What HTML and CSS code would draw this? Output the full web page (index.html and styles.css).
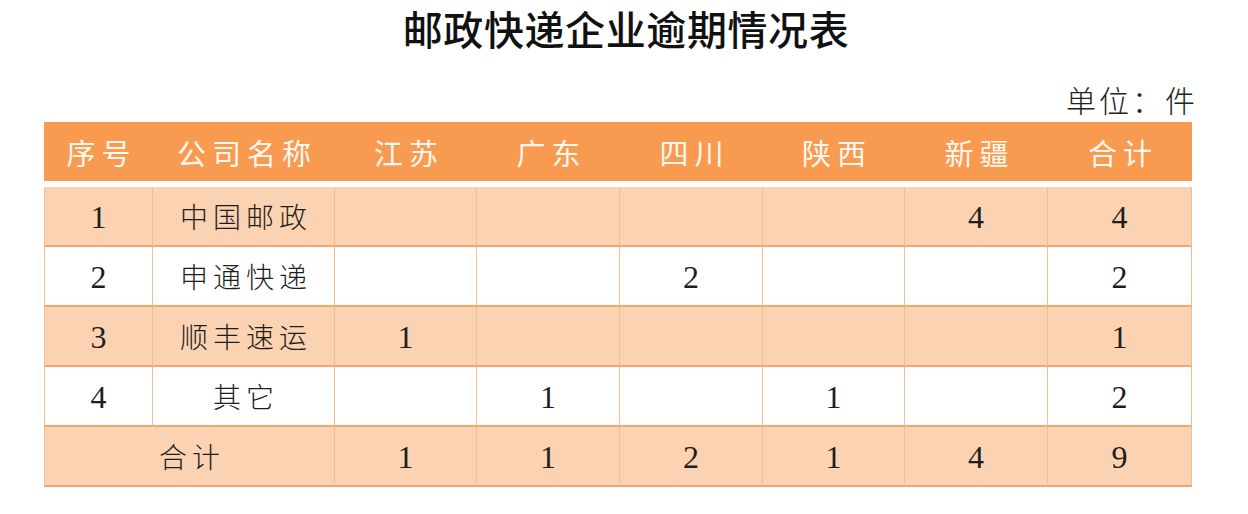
FILE: index.html
```html
<!DOCTYPE html>
<html lang="zh">
<head>
<meta charset="utf-8">
<title>邮政快递企业逾期情况表</title>
<link rel="stylesheet" href="styles.css">
</head>
<body>
<div class="page">
  <h1 class="title">邮政快递企业逾期情况表</h1>
  <div class="unit">单位：件</div>
  <div class="table">
    <div class="row head">
      <div class="cell">序号</div>
      <div class="cell">公司名称</div>
      <div class="cell">江苏</div>
      <div class="cell">广东</div>
      <div class="cell">四川</div>
      <div class="cell">陕西</div>
      <div class="cell">新疆</div>
      <div class="cell">合计</div>
    </div>
    <div class="row tint">
      <div class="cell num">1</div>
      <div class="cell name">中国邮政</div>
      <div class="cell num"></div>
      <div class="cell num"></div>
      <div class="cell num"></div>
      <div class="cell num"></div>
      <div class="cell num">4</div>
      <div class="cell num">4</div>
    </div>
    <div class="row">
      <div class="cell num">2</div>
      <div class="cell name">申通快递</div>
      <div class="cell num"></div>
      <div class="cell num"></div>
      <div class="cell num">2</div>
      <div class="cell num"></div>
      <div class="cell num"></div>
      <div class="cell num">2</div>
    </div>
    <div class="row tint">
      <div class="cell num">3</div>
      <div class="cell name">顺丰速运</div>
      <div class="cell num">1</div>
      <div class="cell num"></div>
      <div class="cell num"></div>
      <div class="cell num"></div>
      <div class="cell num"></div>
      <div class="cell num">1</div>
    </div>
    <div class="row">
      <div class="cell num">4</div>
      <div class="cell name">其它</div>
      <div class="cell num"></div>
      <div class="cell num">1</div>
      <div class="cell num"></div>
      <div class="cell num">1</div>
      <div class="cell num"></div>
      <div class="cell num">2</div>
    </div>
    <div class="row tint total">
      <div class="cell name span2">合计</div>
      <div class="cell num">1</div>
      <div class="cell num">1</div>
      <div class="cell num">2</div>
      <div class="cell num">1</div>
      <div class="cell num">4</div>
      <div class="cell num">9</div>
    </div>
  </div>
</div>
</body>
</html>
```

FILE: styles.css
```css
html, body {
  margin: 0;
  padding: 0;
  background: #ffffff;
}

.page {
  width: 1248px;
  height: 514px;
  padding-top: 6px;
  box-sizing: border-box;
  font-family: "Noto Sans CJK SC", "Noto Sans", sans-serif;
  color: #1e1e1e;
}

.title {
  margin: 0;
  text-align: center;
  font-size: 40px;
  line-height: 44px;
  font-weight: 500;
  letter-spacing: 0.6px;
  padding-left: 4px;
  color: #111;
}

.unit {
  margin-top: 32px;
  text-align: right;
  padding-right: 50px;
  font-size: 30px;
  line-height: 34px;
  letter-spacing: 3px;
  font-weight: 300;
  color: #222;
}

.table {
  margin-top: 6px;
  margin-left: 44px;
  width: 1148px;
}

.row {
  display: grid;
  grid-template-columns: 109px 182px 142px 143px 143px 142px 143px 144px;
  height: 60px;
}

.row .cell {
  display: flex;
  align-items: center;
  justify-content: center;
  box-sizing: border-box;
  border-right: 1px solid #f6bd92;
  border-bottom: 2px solid #f3a56c;
}

.row .cell:first-child {
  border-left: 1px solid #f6bd92;
}

.row.head {
  height: 59px;
  background: #f89a4f;
  margin-bottom: 6px;
}

.row.head .cell {
  border: none;
  color: #fff8f0;
  font-size: 29px;
  font-weight: 400;
  letter-spacing: 6px;
  padding-left: 6px;
}

.tint {
  background: #fbd3b3;
}

.name {
  font-size: 28px;
  font-weight: 300;
  letter-spacing: 5px;
  padding-left: 5px;
}

.num {
  font-family: "Liberation Serif", "DejaVu Serif", serif;
  font-size: 32px;
  padding-top: 2px;
}

.span2 {
  grid-column: span 2;
}
```
